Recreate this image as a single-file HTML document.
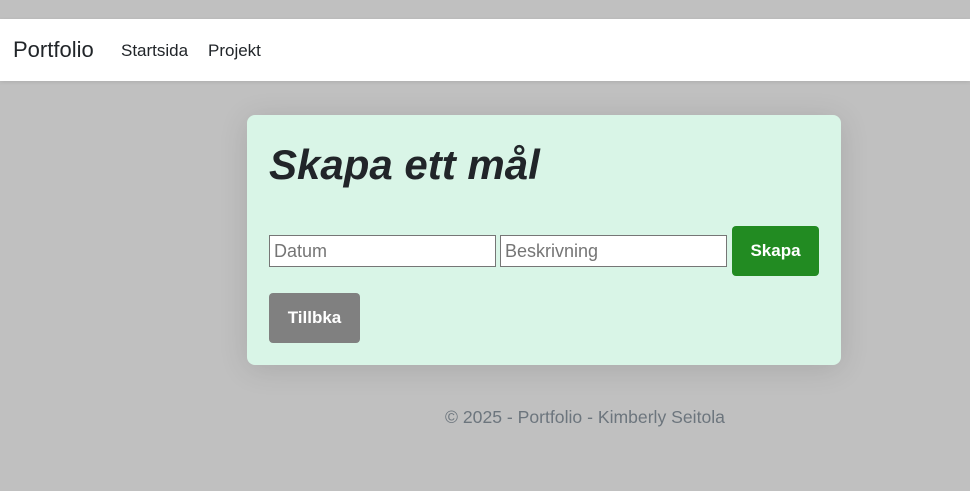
<!DOCTYPE html>
<html><head><style>
body{margin:0;width:970px;height:491px;background:#c0c0c0;font-family:"Liberation Sans",sans-serif;position:relative;overflow:hidden}
.nav{position:absolute;top:19px;left:0;width:970px;height:62px;background:#fff;box-shadow:0 1px 4px rgba(0,0,0,.1)}
.brand{position:absolute;left:13px;top:18px;font-size:22px;color:#212529}
.l{position:absolute;top:22px;font-size:17px;color:#212529}
.card{position:absolute;left:247px;top:115px;width:594px;height:250px;background:#d9f5e7;border-radius:8px;box-shadow:0 4px 30px rgba(0,0,0,.12)}
h1{position:absolute;left:22px;top:26px;margin:0;font-size:42px;font-style:italic;font-weight:bold;color:#212529}
.in{position:absolute;top:120px;border:1px solid #767676;background:#fff;font-size:18px;color:#757575;line-height:30px;padding-left:4px;box-sizing:border-box;width:227px;height:32px}
.btn{position:absolute;color:#fff;font-weight:bold;font-size:17px;text-align:center;border-radius:4px}
.foot{position:absolute;top:407px;left:0;width:1170px;text-align:center;font-size:17.6px;color:#6c757d}
</style></head><body>
<div class="nav"><span class="brand">Portfolio</span><span class="l" style="left:121px">Startsida</span><span class="l" style="left:208px">Projekt</span></div>
<div class="card">
<h1>Skapa ett mål</h1>
<div class="in" style="left:22px">Datum</div>
<div class="in" style="left:253px">Beskrivning</div>
<div class="btn" style="left:485px;top:111px;width:87px;height:50px;line-height:50px;background:#228b22">Skapa</div>
<div class="btn" style="left:22px;top:178px;width:91px;height:50px;line-height:50px;background:#808080">Tillbka</div>
</div>
<div class="foot">© 2025 - Portfolio - Kimberly Seitola</div>
</body></html>
